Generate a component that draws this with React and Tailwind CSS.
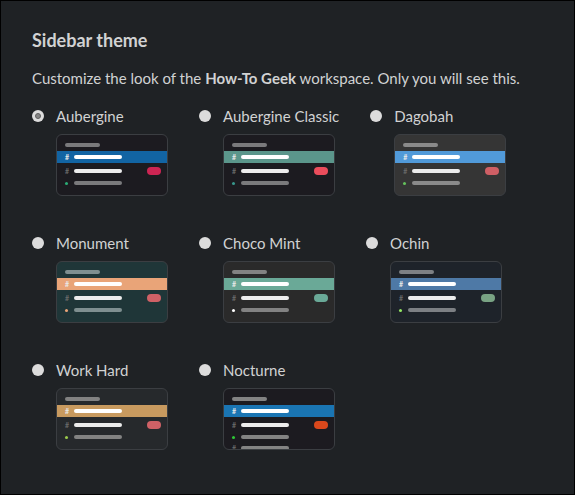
import React from 'react';

const themes = [
  { name: 'Aubergine', selected: true, bg: 'bg-[#1c1b20]', band: 'bg-[#1264a3]', pill: 'bg-[#cd2553]', dot: 'bg-[#2bac76]', bar: 'bg-[#7a7a7c]' },
  { name: 'Aubergine Classic', bg: 'bg-[#1c1b20]', band: 'bg-[#5b968b]', pill: 'bg-[#eb4d5c]', dot: 'bg-[#38978d]', bar: 'bg-[#7a7a7c]' },
  { name: 'Dagobah', bg: 'bg-[#353535]', band: 'bg-[#519ad9]', pill: 'bg-[#cf5f65]', dot: 'bg-[#65c25c]', bar: 'bg-[#8a8a8a]' },
  { name: 'Monument', bg: 'bg-[#1f3638]', band: 'bg-[#e9a478]', pill: 'bg-[#cf6166]', dot: 'bg-[#e9a478]', bar: 'bg-[#7f8f90]' },
  { name: 'Choco Mint', bg: 'bg-[#2a2a2a]', band: 'bg-[#6aa997]', pill: 'bg-[#6aa997]', dot: 'bg-white', bar: 'bg-[#828282]' },
  { name: 'Ochin', bg: 'bg-[#1e232a]', band: 'bg-[#4e79a6]', pill: 'bg-[#79a384]', dot: 'bg-[#94e864]', bar: 'bg-[#7d8084]' },
  { name: 'Work Hard', bg: 'bg-[#26292c]', band: 'bg-[#c89a5f]', pill: 'bg-[#cf6166]', dot: 'bg-[#9bcb4c]', bar: 'bg-[#828282]' },
  { name: 'Nocturne', bg: 'bg-[#1c1b20]', band: 'bg-[#1a75b3]', pill: 'bg-[#d9481c]', dot: 'bg-[#2ec936]', bar: 'bg-[#838383]', extra: true },
];

function Preview({ t }) {
  return (
    <div className={`ml-6 mt-2 w-[112px] h-[62px] overflow-hidden rounded-md border border-[#3b3e42] pt-[8px] ${t.bg}`}>
      <div className={`ml-[8px] h-[4px] w-[35px] rounded-full ${t.bar}`} />
      <div className={`mt-[4px] flex h-[12px] items-center ${t.band}`}>
        <span className="ml-[8px] w-[9px] text-[7px] font-bold leading-none text-[#e8e8e8]">#</span>
        <div className="h-[4px] w-[48px] rounded-full bg-white" />
      </div>
      <div className="mt-[4px] flex h-[8px] items-center">
        <span className="ml-[8px] w-[9px] text-[7px] font-bold leading-none text-[#6a6a6a]">#</span>
        <div className="h-[4px] w-[48px] rounded-full bg-[#ececec]" />
        <div className={`ml-auto mr-[6px] h-[8px] w-[14px] rounded-full ${t.pill}`} />
      </div>
      <div className="mt-[4px] flex h-[8px] items-center">
        <span className="ml-[8px] w-[9px]">
          <span className={`block h-[3px] w-[3px] rounded-full ${t.dot}`} />
        </span>
        <div className={`h-[4px] w-[48px] rounded-full ${t.bar}`} />
      </div>
      {t.extra && (
        <div className="mt-[3px] flex h-[8px] items-center">
          <span className="ml-[8px] w-[9px] text-[7px] font-bold leading-none text-[#6a6a6a]">#</span>
          <div className={`h-[4px] w-[48px] rounded-full ${t.bar}`} />
        </div>
      )}
    </div>
  );
}

function Radio({ on }) {
  return (
    <span className="flex h-[12px] w-[12px] items-center justify-center rounded-full bg-[#dcdcdc]">
      {on && <span className="h-[6px] w-[6px] rounded-full border border-[#5f5f5f] bg-[#858585]" />}
    </span>
  );
}

export default function App() {
  return (
    <div className="h-[495px] w-[575px] border border-black bg-[#1f2225] font-['Lato',sans-serif] text-[#d1d2d3]">
      <div className="px-[31px] pt-[27px]">
        <h2 className="text-[18px] font-bold leading-[24px] text-[#d1d2d3]">Sidebar theme</h2>
        <p className="mt-[15px] text-[15px] leading-[22px]">
          Customize the look of the <b className="font-bold">How-To Geek</b> workspace. Only you will see this.
        </p>
        <div className="mt-[17px] flex flex-wrap gap-x-[31px] gap-y-[37px]">
          {themes.map((t) => (
            <div key={t.name} className="flex flex-col">
              <div className="flex h-[20px] items-center gap-3">
                <Radio on={t.selected} />
                <span className="text-[15px] leading-[20px]">{t.name}</span>
              </div>
              <Preview t={t} />
            </div>
          ))}
        </div>
      </div>
    </div>
  );
}
